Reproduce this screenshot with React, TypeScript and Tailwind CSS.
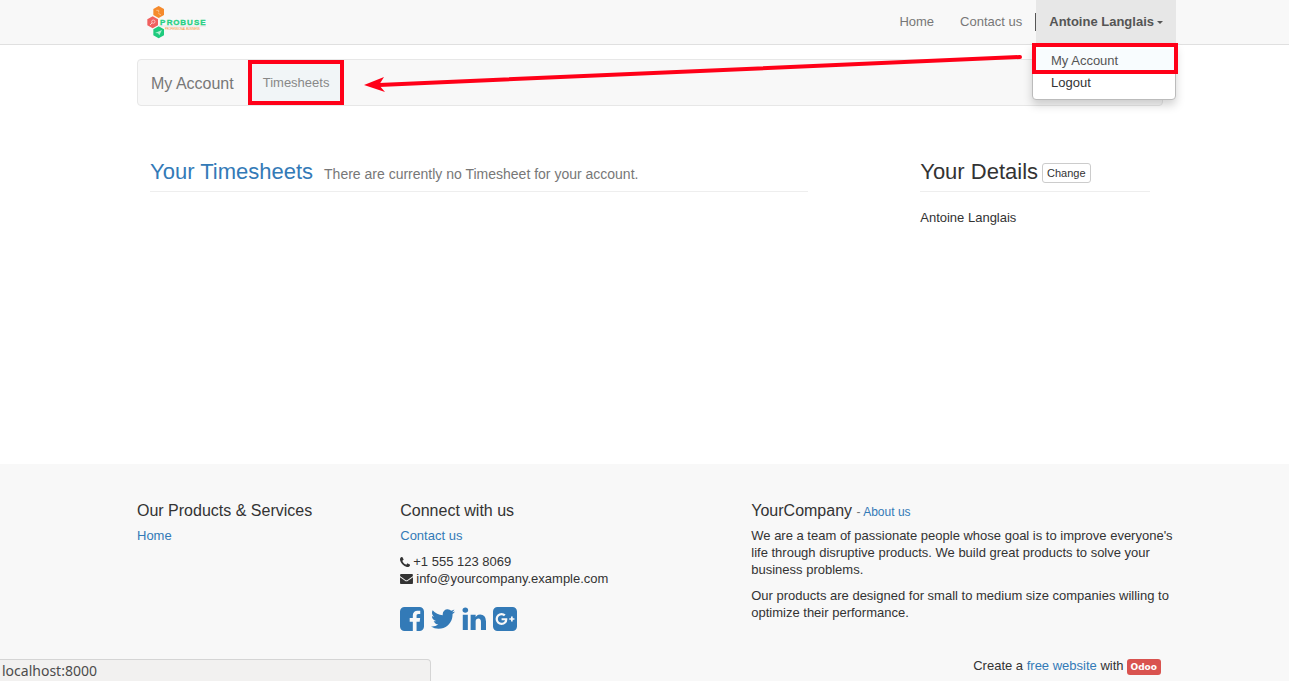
import React from "react";

const ICONS = {
  phone:
    "M1600 1240q0 27-10 70.5t-21 68.5q-21 50-122 106-94 51-186 51-27 0-52.5-3.5t-57.5-12.5-47.5-14.5-55.5-20.5-49-18q-98-35-175-83-128-79-264.5-215.5t-215.5-264.5q-48-77-83-175-3-9-18-49t-20.5-55.5-14.5-47.5-12.5-57.5-3.5-52.5q0-92 51-186 56-101 106-122 25-11 68.5-21t70.5-10q14 0 21 3 18 6 53 76 11 19 30 54t35 63.5 31 53.5q3 4 17.5 25t21.5 35.5 7 28.5q0 20-28.5 50t-62 55-62 53-28.5 46q0 9 5 22.5t8.5 20.5 14 24 11.5 19q76 137 174 235t235 174q2 1 19 11.5t24 14 20.5 8.5 22.5 5q18 0 46-28.5t53-62 55-62 50-28.5q14 0 28.5 7t35.5 21.5 25 17.5q25 15 53.5 31t63.5 35 54 30q70 35 76 53 3 7 3 21z",
  envelope:
    "M1792 710v794q0 66-47 113t-113 47h-1472q-66 0-113-47t-47-113v-794q44 49 101 87 362 246 497 345 57 42 92.5 65.5t94.5 48 110 24.5h2q51 0 110-24.5t94.5-48 92.5-65.5q170-123 498-345 57-39 100-87zm0-294q0 79-49 151t-122 123q-376 261-468 325-10 7-42.5 31t-54 38.5-52 32.5-57.5 27-50 9h-2q-23 0-50-9t-57.5-27-52-32.5-54-38.5-42.5-31q-91-64-262-182.5t-205-142.5q-62-42-117-115.5t-55-136.5q0-78 41.5-130t118.5-52h1472q65 0 112.5 47t47.5 113z",
  facebook:
    "M1376 128q119 0 203.5 84.5t84.5 203.5v960q0 119-84.5 203.5t-203.5 84.5h-188v-595h199l30-232h-229v-148q0-56 23.5-84t91.5-28l122-1v-207q-63-9-178-9-136 0-217.5 80t-81.5 226v171h-200v232h200v595h-532q-119 0-203.5-84.5t-84.5-203.5v-960q0-119 84.5-203.5t203.5-84.5h960z",
  twitter:
    "M1684 408q-67 98-162 167 1 14 1 42 0 130-38 259.5t-115.5 248.5-184.5 210.5-258 146-323 54.5q-271 0-496-145 35 4 78 4 225 0 401-138-105-2-188-64.5t-114-159.5q33 5 61 5 43 0 85-11-112-23-185.5-111.5t-73.5-205.5v-4q68 38 146 41-66-44-105-115t-39-154q0-88 44-163 121 149 294.5 238.5t371.5 99.5q-8-38-8-74 0-134 94.5-228.5t228.5-94.5q140 0 236 102 109-21 205-78-37 115-142 178 93-10 186-50z",
  linkedin:
    "M477 625v991h-330v-991h330zm21-306q1 73-50.5 122t-135.5 49h-2q-82 0-132-49t-50-122q0-74 51.5-122.5t134.5-48.5 133 48.5 51 122.5zm1166 729v568h-329v-530q0-105-40.5-164.5t-126.5-59.5q-63 0-105.5 34.5t-63.5 85.5q-11 30-11 81v553h-329q2-399 2-647t-1-296l-1-48h329v144h-2q20-32 41-56t56.5-52 87-43.5 114.5-15.5q171 0 275 113.5t104 332.5z",
  google:
    "M1045 905q0-26-6-64h-362v132h217q-3 24-16.5 50t-37.5 53-66.5 44.5-96.5 17.5q-99 0-169-71t-70-171 70-171 169-71q92 0 153 59l104-101q-108-100-257-100-160 0-272 112.5t-112 271.5 112 271.5 272 112.5q165 0 266.5-105t101.5-270zm345 46h109v-110h-109v-110h-110v110h-110v110h110v110h110v-110zm274-535v960q0 119-84.5 203.5t-203.5 84.5h-960q-119 0-203.5-84.5t-84.5-203.5v-960q0-119 84.5-203.5t203.5-84.5h960q119 0 203.5 84.5t84.5 203.5z",
};

function Icon({ d, viewBox, className }: { d: string; viewBox: string; className: string }) {
  return (
    <svg viewBox={viewBox} className={className} fill="currentColor" aria-hidden="true">
      <path d={d} />
    </svg>
  );
}

function Logo() {
  return (
    <svg viewBox="0 0 186 99" className="h-[33px] w-[62px]" role="img" aria-label="Probuse">
      <polygon points="41,0 57,9 57,27 41,36 25,27 25,9" fill="#f58a2c" />
      <path d="M34 13h7v6M40 22l8 5" stroke="#f9bd86" strokeWidth="3" fill="none" />
      <polygon points="23,31 39,40 39,58 23,67 7,58 7,40" fill="#f0605f" />
      <circle cx="25" cy="47" r="5" stroke="#fbd0cf" strokeWidth="2.5" fill="none" />
      <path d="M21 51l-6 6" stroke="#fbd0cf" strokeWidth="3" />
      <polygon points="41,61 57,70 57,88 41,97 25,88 25,70" fill="#1ecb7d" />
      <path d="M30 81l21-9-8 16-4-6z" fill="#b5efd4" />
      <path d="M42 60h141" stroke="#d9dddb" strokeWidth="2" />
      <text
        x="45 65 85 106 126 147 166"
        y="56"
        fontSize="24"
        fontWeight="700"
        fill="#25d083"
        stroke="#25d083"
        strokeWidth="1"
        fontFamily="Liberation Sans Narrow, Liberation Sans, sans-serif"
      >
        PROBUSE
      </text>
      <text x="60" y="71" fontSize="8" fill="#f58a2c" fontFamily="Liberation Sans, sans-serif">
        PROFESSIONAL BUSINESS
      </text>
    </svg>
  );
}

function Header() {
  return (
    <header className="border-b border-[#e0e0e0] bg-[#f8f8f8] pl-[11px]">
      <div className="mx-auto flex h-11 max-w-[1026px] justify-between">
        <a href="#home" className="ml-2 flex items-center">
          <Logo />
        </a>
        <nav className="-mr-[13px] flex text-[#777]">
          <a href="#home" className="flex items-center px-[13px] pb-[2px]">Home</a>
          <a href="#contact" className="flex items-center px-[13px] pb-[2px]">Contact us</a>
          <div className="my-auto h-[18px] w-px bg-[#555]" />
          <div className="relative">
            <button
              type="button"
              aria-expanded="true"
              className="flex h-full items-center gap-[3px] bg-[#e7e7e7] px-[13px] pb-[2px] font-bold text-[#555]"
            >
              Antoine Langlais
              <span className="mt-[2px] border-x-[3px] border-t-[3px] border-x-transparent border-t-[#555]" />
            </button>
            <ul className="absolute top-full right-0 z-20 w-36 rounded-b border border-[#bbb] bg-white pt-1 pb-1 text-[#333] shadow-[0_5px_10px_rgba(0,0,0,0.18)]">
              <li className="relative bg-[#f8fcfe] text-[#555]">
                <a href="#account" className="block px-[18px] pt-[3px] pb-[3px]">My Account</a>
                <span className="pointer-events-none absolute -top-[6px] -right-[3px] -bottom-[2px] -left-px border-4 border-[#ff0018]" />
              </li>
              <li>
                <a href="#logout" className="block px-[18px] pt-[2px] pb-[4px]">Logout</a>
              </li>
            </ul>
          </div>
        </nav>
      </div>
    </header>
  );
}

function Arrow() {
  return (
    <svg
      viewBox="0 0 660 42"
      className="pointer-events-none absolute top-[-10px] right-[138px] z-10 h-[42px] w-[660px]"
      aria-hidden="true"
    >
      <path d="M15 35 656 7" stroke="#ff0018" strokeWidth="4" strokeLinecap="round" />
      <path d="M0 35 20 27 15 35 21 42z" fill="#ff0018" />
    </svg>
  );
}

function AccountBar() {
  return (
    <div className="relative mt-[14px] flex h-[47px] items-stretch rounded border border-[#e7e7e7] bg-[#f8f8f8] text-[#777]">
      <a href="#account" className="flex items-center pt-[2px] pr-[15px] pl-[13px] text-base">My Account</a>
      <a href="#timesheets" className="relative flex items-center bg-[#f1f5f7] px-[14px] text-[#888]">
        Timesheets
        <span className="pointer-events-none absolute inset-x-[-1px] inset-y-0 border-4 border-[#ff0018]" />
      </a>
      <Arrow />
    </div>
  );
}

const link = "text-[#337ab7]";
const footerHeading = "mb-[6px] text-base leading-[20px]";

function Footer() {
  return (
    <footer className="bg-[#f8f8f8] pt-[37px] pl-[11px]">
      <div className="mx-auto max-w-[1026px]">
        <div className="grid grid-cols-12 gap-x-[27px]">
          <section className="col-span-3">
            <h4 className={footerHeading}>Our Products &amp; Services</h4>
            <a href="#home" className={link}>Home</a>
          </section>
          <section className="col-span-4">
            <h4 className={footerHeading}>Connect with us</h4>
            <a href="#contact" className={link}>Contact us</a>
            <ul className="mt-[9px]">
              <li className="flex items-center gap-[3px]">
                <Icon d={ICONS.phone} viewBox="192 128 1408 1408" className="size-[10px]" />
                +1 555 123 8069
              </li>
              <li className="flex items-center gap-[3px]">
                <Icon d={ICONS.envelope} viewBox="0 128 1792 1664" className="h-3 w-[13px]" />
                <a href="mailto:info@yourcompany.example.com">info@yourcompany.example.com</a>
              </li>
            </ul>
            <div className={"mt-5 flex gap-[7px] " + link}>
              <a href="#facebook" aria-label="Facebook">
                <Icon d={ICONS.facebook} viewBox="128 128 1536 1536" className="size-6" />
              </a>
              <a href="#twitter" aria-label="Twitter">
                <Icon d={ICONS.twitter} viewBox="108 128 1576 1536" className="size-6" />
              </a>
              <a href="#linkedin" aria-label="LinkedIn">
                <Icon d={ICONS.linkedin} viewBox="96 128 1568 1536" className="size-6" />
              </a>
              <a href="#google" aria-label="Google Plus">
                <Icon d={ICONS.google} viewBox="128 128 1536 1536" className="size-6" />
              </a>
            </div>
          </section>
          <section className="col-span-5">
            <h4 className={footerHeading}>
              YourCompany{" "}
              <small className="text-xs text-[#777]">
                - <a href="#about" className={link}>About us</a>
              </small>
            </h4>
            <p className="-mr-3">
              We are a team of passionate people whose goal is to improve everyone's life through disruptive
              products. We build great products to solve your business problems.
            </p>
            <p className="mt-[9px] -mr-3">
              Our products are designed for small to medium size companies willing to optimize their performance.
            </p>
          </section>
        </div>
        <div className="mt-[26px] flex items-center justify-end gap-[3px] pr-[2px] pb-[5px]">
          <span className="pb-[2px]">
            Create a <a href="#website" className={link}>free website</a> with
          </span>
          <a
            href="#odoo"
            className="rounded-[3px] bg-[#d9534f] px-1 font-['DejaVu_Sans','Noto_Sans',sans-serif] text-[9px] leading-[16px] font-bold text-white"
          >
            Odoo
          </a>
        </div>
      </div>
    </footer>
  );
}

export default function App() {
  return (
    <div className="flex min-h-screen flex-col bg-white font-['Liberation_Sans',Arial,sans-serif] text-[13px] leading-[17px] text-[#333]">
      <Header />
      <main className="grow pl-[11px]">
        <div className="mx-auto max-w-[1026px]">
          <AccountBar />
          <div className="mt-[53px] grid grid-cols-12 gap-x-[27px] px-[13px]">
            <section className="col-span-8">
              <h3 className="flex items-baseline gap-[11px] border-b border-[#eee] pb-[7px] text-[22px] leading-[25px]">
                <a href="#timesheets" className={link}>Your Timesheets</a>
                <small className="text-sm text-[#777]">
                  There are currently no Timesheet for your account.
                </small>
              </h3>
            </section>
            <section className="col-span-3 col-start-10">
              <div className="flex items-center gap-1 border-b border-[#eee] pb-[7px]">
                <h3 className="text-[22px] leading-[25px]">Your Details</h3>
                <button
                  type="button"
                  className="mt-px -mb-px rounded-[3px] border border-[#ccc] bg-white px-1 text-[11px] leading-[18px]"
                >
                  Change
                </button>
              </div>
              <p className="mt-[17px]">Antoine Langlais</p>
            </section>
          </div>
        </div>
      </main>
      <Footer />
      <div className="fixed bottom-0 left-0 z-30 h-[22px] w-[431px] rounded-tr border-t border-r border-[#d5d5d5] bg-[#f2f1f0] pl-[2px] font-['Noto_Sans',sans-serif] text-sm leading-[22px] text-[#4c4c4c]">
        localhost:8000
      </div>
    </div>
  );
}
